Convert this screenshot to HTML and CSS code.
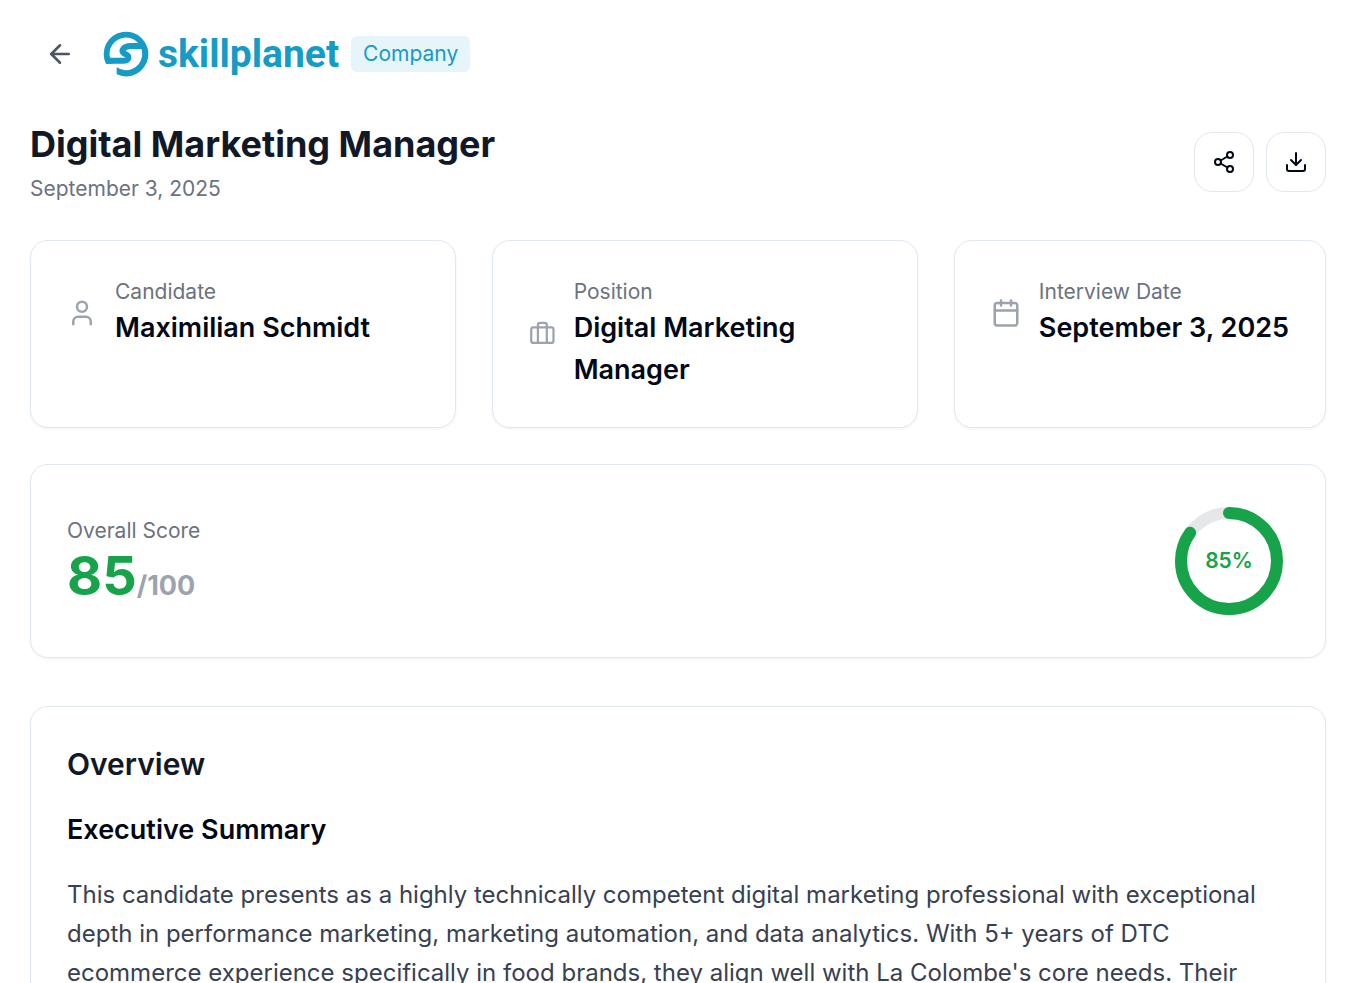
FILE: index.html
```html
<!DOCTYPE html>
<html lang="en">
<head>
    <meta charset="UTF-8">
    <meta name="viewport" content="width=device-width, initial-scale=1.0">
    <title>Digital Marketing Manager - Skillplanet</title>
    <link rel="stylesheet" href="styles.css">
</head>
<body>

<div class="container">
    <!-- Top bar -->
    <header class="topbar">
        <button type="button" class="back-button" aria-label="Back">
            <svg class="icon" viewBox="0 0 24 24"><path d="m12 19-7-7 7-7"/><path d="M19 12H5"/></svg>
        </button>
        <a href="#" class="logo">
            <svg class="logo-mark" viewBox="0 0 144 144">
                <path class="logo-ring" d="M44 133A67 67 0 1 0 11.600 101H32.500A49 49 0 1 1 44 112Z"/>
                <path class="logo-swirl" d="M126 48H86C66 48 54 62 66 70C74 75 80 74 79 83C78 90 72 92 66 92H12"/>
            </svg>
            <span class="logo-text">skillplanet</span>
        </a>
        <span class="badge">Company</span>
    </header>

    <!-- Page title and actions -->
    <div class="title-row">
        <div class="title-text">
            <h1>Digital Marketing Manager</h1>
            <p class="label">September 3, 2025</p>
        </div>
        <div class="actions">
            <button type="button" class="action-button" aria-label="Share">
                <svg class="icon" viewBox="0 0 24 24"><circle cx="18" cy="5" r="3"/><circle cx="6" cy="12" r="3"/><circle cx="18" cy="19" r="3"/><path d="m8.590 13.510 6.830 3.980"/><path d="m15.410 6.510-6.820 3.980"/></svg>
            </button>
            <button type="button" class="action-button" aria-label="Download">
                <svg class="icon" viewBox="0 0 24 24"><path d="M21 15v4a2 2 0 0 1-2 2H5a2 2 0 0 1-2-2v-4"/><path d="m7 10 5 5 5-5"/><path d="M12 15V3"/></svg>
            </button>
        </div>
    </div>

    <!-- Interview details -->
    <div class="info-grid">
        <div class="card">
            <div class="info">
                <svg class="info-icon" viewBox="0 0 24 24"><path d="M19 21v-2a4 4 0 0 0-4-4H9a4 4 0 0 0-4 4v2"/><circle cx="12" cy="7" r="4"/></svg>
                <div>
                    <p class="label">Candidate</p>
                    <p class="value">Maximilian Schmidt</p>
                </div>
            </div>
        </div>
        <div class="card">
            <div class="info">
                <svg class="info-icon" viewBox="0 0 24 24"><path d="M16 20V4a2 2 0 0 0-2-2h-4a2 2 0 0 0-2 2v16"/><rect width="20" height="14" x="2" y="6" rx="2"/></svg>
                <div>
                    <p class="label">Position</p>
                    <p class="value">Digital Marketing Manager</p>
                </div>
            </div>
        </div>
        <div class="card">
            <div class="info">
                <svg class="info-icon" viewBox="0 0 24 24"><path d="M8 2v4"/><path d="M16 2v4"/><rect width="18" height="18" x="3" y="4" rx="2"/><path d="M3 10h18"/></svg>
                <div>
                    <p class="label">Interview Date</p>
                    <p class="value nowrap">September 3, 2025</p>
                </div>
            </div>
        </div>
    </div>

    <!-- Score -->
    <section class="card score-card">
        <div>
            <p class="label">Overall Score</p>
            <p class="score">85<span class="score-max">/100</span></p>
        </div>
        <div class="ring">
            <svg viewBox="0 0 120 120">
                <circle class="ring-track" cx="60" cy="60" r="48"/>
                <circle class="ring-value" cx="60" cy="60" r="48" pathLength="100" stroke-dasharray="85 100" transform="rotate(-90 60 60)"/>
            </svg>
            <span class="ring-text">85%</span>
        </div>
    </section>

    <!-- Overview -->
    <section class="card overview">
        <h2>Overview</h2>
        <h3>Executive Summary</h3>
        <p class="summary">This candidate presents as a highly technically competent digital marketing professional with exceptional depth in performance marketing, marketing automation, and data analytics. With 5+ years of DTC ecommerce experience specifically in food brands, they align well with La Colombe's core needs. Their</p>
    </section>
</div>

</body>
</html>
```
FILE: styles.css
```css
* {
    margin: 0;
    padding: 0;
    box-sizing: border-box;
}

body {
    font-family: Inter, "Liberation Sans", sans-serif;
    background-color: white;
    color: #020817;
}

button {
    font: inherit;
    background: none;
    border: none;
    cursor: pointer;
}

svg {
    fill: none;
    stroke: currentColor;
    stroke-width: 2;
    stroke-linecap: round;
    stroke-linejoin: round;
}

.container {
    padding: 24px 28px 24px 30px;
}

/* Top bar */
.topbar {
    display: flex;
    align-items: center;
    gap: 12px;
    margin-bottom: 36px;
}

.back-button {
    display: flex;
    align-items: center;
    justify-content: center;
    width: 60px;
    height: 60px;
    color: #4b5563;
}

.back-button .icon {
    width: 30px;
    height: 30px;
}

.logo {
    display: flex;
    align-items: center;
    gap: 8px;
    color: #149bc6;
    text-decoration: none;
}

.logo-mark {
    width: 48px;
    height: 48px;
    stroke-linecap: butt;
}

.logo-ring {
    fill: currentColor;
    stroke: none;
}

.logo-swirl {
    stroke-width: 18;
}

.logo-text {
    font-family: Roboto, sans-serif;
    font-size: 39px;
    font-weight: 700;
    line-height: 48px;
}

.badge {
    padding: 3px 12px;
    border-radius: 6px;
    background-color: #e6f5fa;
    color: #149bc6;
    font-size: 21px;
    line-height: 30px;
}

/* Title */
.title-row {
    display: flex;
    align-items: center;
    justify-content: space-between;
    margin-bottom: 36px;
}

.title-text {
    display: flex;
    flex-direction: column;
    gap: 6px;
}

h1 {
    font-size: 36px;
    font-weight: 700;
    line-height: 48px;
    color: #111827;
}

.label {
    font-size: 21px;
    line-height: 30px;
    color: #6b7280;
}

.actions {
    display: flex;
    gap: 12px;
}

.action-button {
    display: flex;
    align-items: center;
    justify-content: center;
    width: 60px;
    height: 60px;
    border: 1px solid #e2e8f0;
    border-radius: 18px;
    color: #020817;
}

.action-button .icon {
    width: 24px;
    height: 24px;
}

/* Cards */
.card {
    padding: 36px;
    border: 1px solid #e2e8f0;
    border-radius: 18px;
    background-color: white;
    box-shadow: 0 1px 3px rgba(0, 0, 0, 0.05);
}

.info-grid {
    display: grid;
    grid-template-columns: 1fr 1fr auto;
    gap: 36px;
    margin-bottom: 36px;
}

.info {
    display: flex;
    align-items: center;
    gap: 18px;
}

.info-icon {
    width: 30px;
    height: 30px;
    color: #9ca3af;
}

.value {
    font-size: 27px;
    font-weight: 600;
    line-height: 42px;
}

.nowrap {
    white-space: nowrap;
}

/* Score */
.score-card {
    display: flex;
    align-items: center;
    justify-content: space-between;
    margin-bottom: 48px;
}

.score {
    font-size: 54px;
    font-weight: 700;
    line-height: 60px;
    color: #16a34a;
}

.score-max {
    font-size: 27px;
    line-height: 30px;
    color: #9ca3af;
}

.ring {
    display: grid;
    place-items: center;
    width: 120px;
    height: 120px;
}

.ring svg,
.ring-text {
    grid-area: 1 / 1;
}

.ring svg {
    width: 120px;
    height: 120px;
    stroke-width: 12;
}

.ring-track {
    stroke: #e5e7eb;
}

.ring-value {
    stroke: #16a34a;
}

.ring-text {
    font-size: 21px;
    font-weight: 600;
    line-height: 30px;
    color: #16a34a;
}

/* Overview */
h2 {
    margin-bottom: 24px;
    font-size: 30px;
    font-weight: 600;
    line-height: 42px;
    color: #111827;
}

h3 {
    margin-bottom: 24px;
    font-size: 27px;
    font-weight: 600;
    line-height: 42px;
}

.summary {
    font-size: 24px;
    line-height: 39px;
    color: #374151;
}
```
